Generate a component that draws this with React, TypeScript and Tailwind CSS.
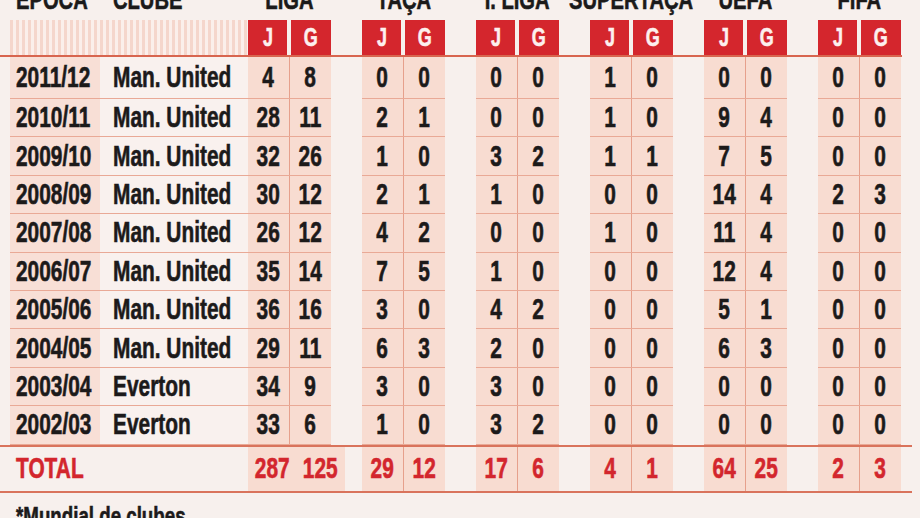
import React from 'react'

const FONT = "font-['Liberation_Sans',Arial,sans-serif]"

const groups = ['LIGA', 'TAÇA', 'I. LIGA', 'SUPERTAÇA', 'UEFA', 'FIFA']

const rows: [string, string, number[]][] = [
  ['2011/12', 'Man. United', [4, 8, 0, 0, 0, 0, 1, 0, 0, 0, 0, 0]],
  ['2010/11', 'Man. United', [28, 11, 2, 1, 0, 0, 1, 0, 9, 4, 0, 0]],
  ['2009/10', 'Man. United', [32, 26, 1, 0, 3, 2, 1, 1, 7, 5, 0, 0]],
  ['2008/09', 'Man. United', [30, 12, 2, 1, 1, 0, 0, 0, 14, 4, 2, 3]],
  ['2007/08', 'Man. United', [26, 12, 4, 2, 0, 0, 1, 0, 11, 4, 0, 0]],
  ['2006/07', 'Man. United', [35, 14, 7, 5, 1, 0, 0, 0, 12, 4, 0, 0]],
  ['2005/06', 'Man. United', [36, 16, 3, 0, 4, 2, 0, 0, 5, 1, 0, 0]],
  ['2004/05', 'Man. United', [29, 11, 6, 3, 2, 0, 0, 0, 6, 3, 0, 0]],
  ['2003/04', 'Everton', [34, 9, 3, 0, 3, 0, 0, 0, 0, 0, 0, 0]],
  ['2002/03', 'Everton', [33, 6, 1, 0, 3, 2, 0, 0, 0, 0, 0, 0]],
]

const totals = [287, 125, 29, 12, 17, 6, 4, 1, 64, 25, 2, 3]

// condensed look: the paper uses a narrow black face, we squeeze a regular bold one
function C({ children, left }: { children: React.ReactNode; left?: boolean }) {
  return (
    <span className={`inline-block whitespace-nowrap scale-x-[0.72] [-webkit-text-stroke:0.6px_currentColor] ${left ? 'origin-left' : 'origin-center'}`}>
      {children}
    </span>
  )
}

function Pair({ j, g, h, total }: { j: number; g: number; h: string; total?: boolean }) {
  const txt = total ? 'text-[#d3262d]' : 'text-[#1c1a1a]'
  return (
    <div className={`flex w-[83px] ${h} ${total ? '' : 'border-b-[1.5px] border-[#e9a996]'}`}>
      <div className={`flex-1 flex items-center justify-center bg-[#f8dcd1] ${txt}`}><C>{j}</C></div>
      <div className="w-px bg-[#e6a08c]" />
      <div className={`flex-1 flex items-center justify-center bg-[#f8dcd1] ${txt}`}><C>{g}</C></div>
    </div>
  )
}

export default function App() {
  return (
    <div className={`w-[920px] h-[518px] overflow-hidden bg-[#f7f0ed] ${FONT} font-bold`}>
      {/* titles, cut at the top */}
      <div className="flex items-end h-[12px] pl-[10px] text-[28px] leading-none text-[#1b1a1a]">
        <div className="flex w-[238px] -mb-[2px]">
          <span className="w-[103px] pl-[6px]"><C left>ÉPOCA</C></span>
          <C left>CLUBE</C>
        </div>
        {groups.map((t, i) => (
          <div key={t} className={`w-[83px] flex justify-center -mb-[2px] ${i > 0 ? 'ml-[31px]' : ''}`}><C>{t}</C></div>
        ))}
      </div>

      {/* J / G header */}
      <div className="flex pl-[10px] mt-[8px] h-[37px] border-b-2 border-[#d8654f] w-[902px]">
        <div className="w-[238px] h-[35px] bg-[repeating-linear-gradient(90deg,#f5d6cc_0px,#f5d6cc_3px,#fbefeb_3px,#fbefeb_6px)]" />
        {groups.map((t, i) => (
          <div key={t} className={`flex w-[83px] gap-[4px] ${i > 0 ? 'ml-[31px]' : ''}`}>
            <div className="w-[39px] bg-[#d4262d] text-[#fdf0ee] text-[25px] flex items-center justify-center"><C>J</C></div>
            <div className="w-[40px] bg-[#d4262d] text-[#fdf0ee] text-[25px] flex items-center justify-center"><C>G</C></div>
          </div>
        ))}
      </div>

      {/* data rows */}
      <div className="text-[29px] leading-none">
        {rows.map(([ep, cl, v], r) => {
          const h = r === 0 ? 'h-[42px]' : 'h-[38.4px]'
          return (
            <div key={ep} className="flex pl-[10px]">
              <div className={`flex w-[238px] ${h} border-b-[1.5px] border-[#e9a996] text-[#1c1a1a]`}>
                <div className="w-[90px] bg-[#f8dfd6] flex items-center pl-[6px]"><C left>{ep}</C></div>
                <div className="flex-1 bg-[#f9f1ee] flex items-center pl-[13px]"><C left>{cl}</C></div>
              </div>
              {groups.map((t, i) => (
                <div key={t} className={i > 0 ? 'ml-[31px]' : ''}>
                  <Pair j={v[i * 2]} g={v[i * 2 + 1]} h={h} />
                </div>
              ))}
            </div>
          )
        })}

        {/* total */}
        <div className="flex pl-[10px] w-[902px] border-t-2 border-b-2 border-[#d9735c] box-content">
          <div className="w-[238px] h-[44px] flex items-center pl-[6px] text-[#d3262d]"><C left>TOTAL</C></div>
          {groups.map((t, i) => (
            <div key={t} className={i > 0 ? 'ml-[31px]' : ''}>
              <Pair j={totals[i * 2]} g={totals[i * 2 + 1]} h="h-[44px]" total />
            </div>
          ))}
        </div>
      </div>

      <div className="pl-[16px] pt-[10px] text-[26px] leading-none text-[#1c1a1a]"><C left>*Mundial de clubes</C></div>
    </div>
  )
}
